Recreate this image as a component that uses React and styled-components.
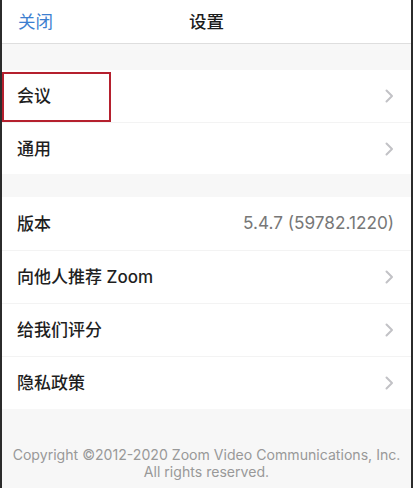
import React from "react";
import styled, { createGlobalStyle } from "styled-components";

const GlobalStyle = createGlobalStyle`
  html, body {
    margin: 0;
    padding: 0;
    background: #ffffff;
  }
  * {
    box-sizing: border-box;
  }
`;

const Frame = styled.div`
  width: 413px;
  height: 488px;
  border-left: 2px solid #2b2b2b;
  border-right: 2px solid #2b2b2b;
  background-color: #f7f7f7;
  font-family: "Inter", "Noto Sans CJK SC", sans-serif;
  display: flex;
  flex-direction: column;
  overflow: hidden;
`;

const Header = styled.div`
  height: 44px;
  background-color: #ffffff;
  border-bottom: 1.5px solid #dedede;
  display: grid;
  grid-template-columns: 1fr auto 1fr;
  align-items: center;
  padding: 0 16px;
`;

const CloseButton = styled.span`
  font-size: 17.5px;
  color: #3d7fd0;
  justify-self: start;
  margin-top: -3px;
`;

const Title = styled.span`
  font-size: 17.5px;
  font-weight: 500;
  color: #1c1c1c;
  margin-top: -3px;
`;

const Spacer = styled.div`
  height: ${props => props.size}px;
  flex-shrink: 0;
`;

const Group = styled.div`
  background-color: #ffffff;
  display: flex;
  flex-direction: column;
`;

const Row = styled.div`
  position: relative;
  height: ${props => props.height || 53}px;
  display: flex;
  align-items: center;
  justify-content: space-between;
  padding: 0 17px 0 15px;
  border-top: ${props => (props.first ? "none" : "1px solid #f3f3f3")};
`;

const Label = styled.span`
  font-size: 17px;
  font-weight: 500;
  color: #1f1f1f;
  margin-top: -3px;
`;

const Value = styled.span`
  font-size: 17.2px;
  color: #777777;
  margin-top: -3px;
`;

const Highlight = styled.div`
  position: absolute;
  left: 0;
  top: 2px;
  width: 109px;
  height: 50px;
  border: 2px solid #b5202e;
`;

const Footer = styled.div`
  flex: 1;
  padding-top: 37px;
  text-align: center;
  font-size: 14.1px;
  line-height: 17px;
  color: #999999;
`;

const Chevron = () => (
  <svg width="9" height="14" viewBox="0 0 9 14">
    <polyline
      points="1.5,1.5 7,7 1.5,12.5"
      fill="none"
      stroke="#c2c2c6"
      strokeWidth="2"
      strokeLinecap="round"
      strokeLinejoin="round"
    />
  </svg>
);

const App = () => {
  return (
    <>
      <GlobalStyle />
      <Frame>
        <Header>
          <CloseButton>关闭</CloseButton>
          <Title>设置</Title>
          <span />
        </Header>
        <Spacer size={26} />
        <Group>
          <Row first height={52}>
            <Label>会议</Label>
            <Chevron />
            <Highlight />
          </Row>
          <Row height={52}>
            <Label>通用</Label>
            <Chevron />
          </Row>
        </Group>
        <Spacer size={23} />
        <Group>
          <Row first>
            <Label>版本</Label>
            <Value>5.4.7 (59782.1220)</Value>
          </Row>
          <Row>
            <Label>向他人推荐 Zoom</Label>
            <Chevron />
          </Row>
          <Row>
            <Label>给我们评分</Label>
            <Chevron />
          </Row>
          <Row>
            <Label>隐私政策</Label>
            <Chevron />
          </Row>
        </Group>
        <Footer>
          Copyright ©2012-2020 Zoom Video Communications, Inc.
          <br />
          All rights reserved.
        </Footer>
      </Frame>
    </>
  );
};

export default App;
